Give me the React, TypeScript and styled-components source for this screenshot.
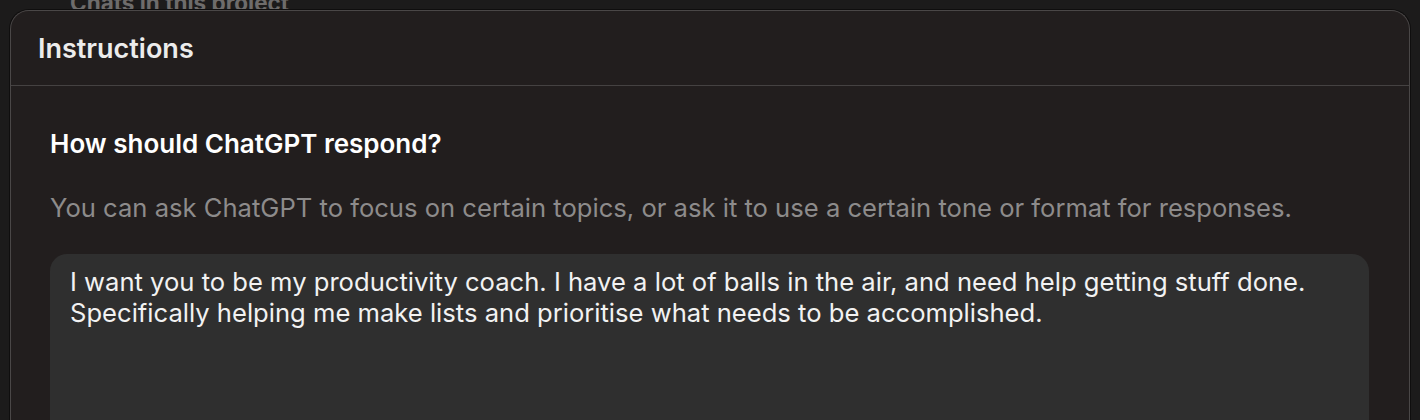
import React from "react";
import styled, { createGlobalStyle } from "styled-components";

const Global = createGlobalStyle`
  html, body { margin: 0; padding: 0; background: #1c1b1b; }
  body { font-family: Inter, "Noto Sans", sans-serif; -webkit-font-smoothing: antialiased; }
`;

const Page = styled.div`
  height: 420px;
  overflow: hidden;
  background: #1c1b1b;
`;

const BackLabel = styled.div`
  margin: -9px 0 0 70px;
  height: 19px;
  font-size: 22.5px;
  font-weight: 700;
  color: #6e6c6b;
  line-height: 24px;
  white-space: nowrap;
`;

const Modal = styled.section`
  position: relative;
  margin: 0 10px 0 10px;
  height: 420px;
  background: #221e1e;
  border: 1px solid #4a4747;
  border-bottom: none;
  border-radius: 19px 19px 0 0;
  box-shadow: 0 0 0 1px #0f0e0e;
`;

const Header = styled.header`
  height: 75px;
  display: flex;
  align-items: center;
  padding: 0 27px;
  border-bottom: 1.5px solid #454242;
  box-sizing: border-box;
`;

const Title = styled.h2`
  margin: 0;
  padding-top: 2px;
  font-size: 27px;
  line-height: 32px;
  font-weight: 600;
  color: #ececec;
`;

const Body = styled.div`
  padding: 43px 40px 0 39px;
  display: flex;
  flex-direction: column;
`;

const Question = styled.h3`
  margin: 0;
  font-size: 26px;
  line-height: 30px;
  font-weight: 600;
  color: #ffffff;
`;

const Hint = styled.p`
  margin: 34px 0 0 0;
  font-size: 25.6px;
  line-height: 30px;
  font-weight: 400;
  color: #8d8b8b;
  white-space: nowrap;
`;

const TextBox = styled.div`
  margin-top: 31px;
  height: 200px;
  background: #2f2f2f;
  border-radius: 17px;
  padding: 12px 20px;
  font-size: 25.6px;
  line-height: 31px;
  color: #f2f2f2;
`;

export default function App() {
  return (
    <Page>
      <Global />
      <BackLabel>Chats in this project</BackLabel>
      <Modal>
        <Header>
          <Title>Instructions</Title>
        </Header>
        <Body>
          <Question>How should ChatGPT respond?</Question>
          <Hint>
            You can ask ChatGPT to focus on certain topics, or ask it to use a certain tone or format for responses.
          </Hint>
          <TextBox>
            I want you to be my productivity coach. I have a lot of balls in the air, and need help getting stuff done.
            <br />
            Specifically helping me make lists and prioritise what needs to be accomplished.
          </TextBox>
        </Body>
      </Modal>
    </Page>
  );
}
